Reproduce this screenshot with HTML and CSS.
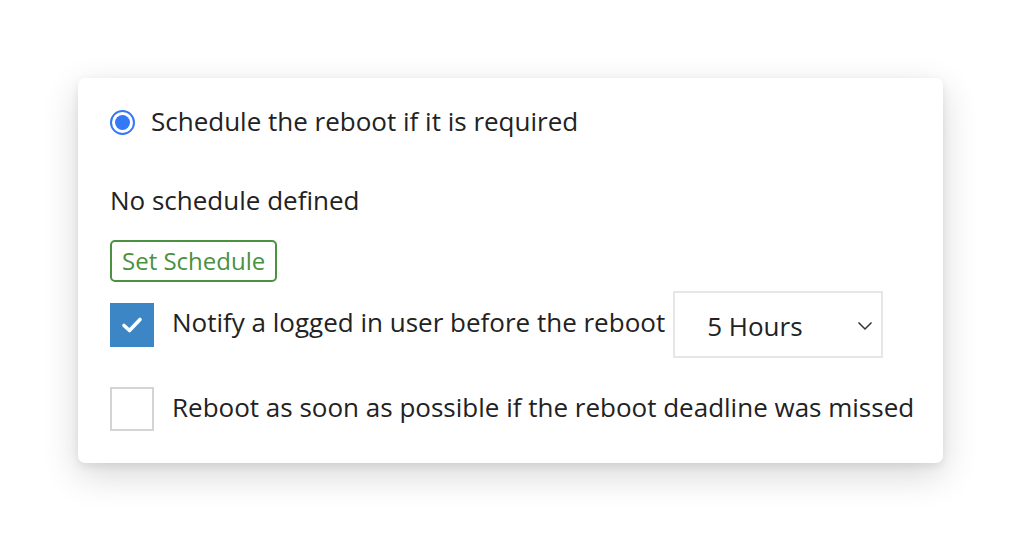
FILE: index.html
```html
<!DOCTYPE html>
<html>
<head>
<meta charset="utf-8">
<link rel="stylesheet" href="styles.css">
</head>
<body>
<div class="card">
  <label class="radio-row">
    <span class="radio"><span class="radio-dot"></span></span>
    <span class="label">Schedule the reboot if it is required</span>
  </label>
  <div class="no-schedule">No schedule defined</div>
  <div class="btn-row"><button class="btn-outline">Set Schedule</button></div>
  <div class="check-row notify">
    <span class="checkbox checked">
      <svg width="22" height="18" viewBox="0 0 22 18"><path d="M3 9.5 L8.5 14.5 L19 3.5" fill="none" stroke="#fff" stroke-width="3.6" stroke-linecap="round" stroke-linejoin="round"/></svg>
    </span>
    <span class="label">Notify a logged in user before the reboot</span>
    <div class="select">
      <span>5 Hours</span>
      <svg class="chev" width="16" height="10" viewBox="0 0 16 10"><path d="M1.5 1.5 L8 8 L14.5 1.5" fill="none" stroke="#333" stroke-width="1.5"/></svg>
    </div>
  </div>
  <div class="check-row">
    <span class="checkbox"></span>
    <span class="label">Reboot as soon as possible if the reboot deadline was missed</span>
  </div>
</div>
</body>
</html>
```
FILE: styles.css
```css
html, body {
  margin: 0;
  padding: 0;
  background: #ffffff;
}
body {
  font-family: "Open Sans", "Noto Sans", sans-serif;
  color: #222;
  padding: 78px 0 0 78px;
  min-height: 100vh;
  box-sizing: border-box;
}
.card {
  width: 865px;
  height: 385px;
  box-sizing: border-box;
  background: #fff;
  border-radius: 7px;
  box-shadow: 0 12px 36px rgba(0,0,0,0.16), 0 3px 8px rgba(0,0,0,0.08);
  padding: 27px 24px 0 32px;
  display: flex;
  flex-direction: column;
}
.label {
  white-space: nowrap;
}
.radio-row {
  display: flex;
  align-items: center;
  height: 34px;
  font-size: 26px;
}
.radio-row .label {
  margin-bottom: 3px;
}
.radio {
  width: 25px;
  height: 25px;
  box-sizing: border-box;
  border: 2px solid #3478f6;
  border-radius: 50%;
  display: flex;
  align-items: center;
  justify-content: center;
  margin-right: 16px;
}
.radio-dot {
  width: 15px;
  height: 15px;
  border-radius: 50%;
  background: #3478f6;
}
.no-schedule {
  margin-top: 44px;
  font-size: 26px;
  line-height: 34px;
  margin-bottom: 1px;
}
.btn-row {
  margin-top: 22px;
}
.btn-outline {
  height: 42px;
  padding: 0 10px;
  border: 2px solid #4a9140;
  border-radius: 5px;
  background: #fff;
  color: #4a9140;
  font-family: "Open Sans", sans-serif;
  font-size: 24px;
  line-height: 38px;
}
.check-row {
  display: flex;
  align-items: center;
  font-size: 26px;
  margin-top: 29px;
}
.check-row .label {
  margin-bottom: 5px;
}
.check-row.notify {
  margin-top: 9px;
}
.checkbox {
  width: 44px;
  height: 44px;
  box-sizing: border-box;
  border: 2px solid #d4d4d4;
  background: #fff;
  margin-right: 18px;
  display: flex;
  align-items: center;
  justify-content: center;
  flex: none;
}
.checkbox.checked {
  background: #3d86c6;
  border-color: #3d86c6;
}
.select {
  margin-left: 8px;
  width: 210px;
  height: 67px;
  box-sizing: border-box;
  border: 2px solid #e6e6e6;
  display: flex;
  align-items: center;
  justify-content: space-between;
  padding: 2px 8px 0 32px;
}
```
